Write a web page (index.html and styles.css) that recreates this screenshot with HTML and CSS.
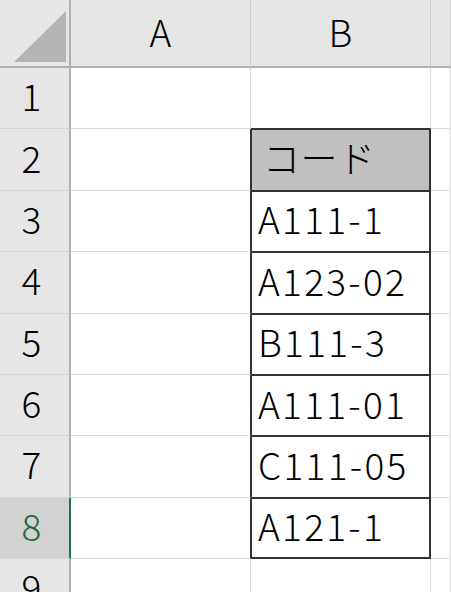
FILE: index.html
```html
<!DOCTYPE html>
<html>

<head>
    <meta charset="utf-8">
    <meta name="viewport" content="width=device-width, initial-scale=1.0">
    <title>Sheet</title>
    <link rel="stylesheet" href="styles.css">
</head>

<body>
    <div class="sheet">
        <!-- 列見出し -->
        <div class="corner">
            <svg width="70" height="67" viewBox="0 0 70 67">
                <polygon points="14,62 66,11 66,62" fill="#b4b4b4" />
            </svg>
        </div>
        <div class="col-head">A</div>
        <div class="col-head">B</div>
        <div class="col-head"></div>

        <div class="row-head">1</div>
        <div class="cell"></div>
        <div class="cell top-of-table"></div>
        <div class="cell"></div>

        <div class="row-head">2</div>
        <div class="cell left-of-table"></div>
        <div class="cell boxed title">コード</div>
        <div class="cell"></div>

        <div class="row-head">3</div>
        <div class="cell left-of-table"></div>
        <div class="cell boxed">A111-1</div>
        <div class="cell"></div>

        <div class="row-head">4</div>
        <div class="cell left-of-table"></div>
        <div class="cell boxed">A123-02</div>
        <div class="cell"></div>

        <div class="row-head">5</div>
        <div class="cell left-of-table"></div>
        <div class="cell boxed">B111-3</div>
        <div class="cell"></div>

        <div class="row-head">6</div>
        <div class="cell left-of-table"></div>
        <div class="cell boxed">A111-01</div>
        <div class="cell"></div>

        <div class="row-head">7</div>
        <div class="cell left-of-table"></div>
        <div class="cell boxed">C111-05</div>
        <div class="cell"></div>

        <div class="row-head selected">8</div>
        <div class="cell left-of-table"></div>
        <div class="cell boxed last">A121-1</div>
        <div class="cell"></div>

        <div class="row-head">9</div>
        <div class="cell"></div>
        <div class="cell"></div>
        <div class="cell"></div>
    </div>
</body>

</html>
```

FILE: styles.css
```css
body {
    margin: 0;
    background: #ffffff;
    color: #000000;
    font-family: "Noto Sans CJK JP", "Noto Sans", sans-serif;
    font-weight: 300;
    overflow: hidden;
}

.sheet {
    display: grid;
    grid-template-columns: 71px 180px 180px 1fr;
    grid-template-rows: 68px repeat(9, 61.375px);
    width: 451px;
}

.sheet > div {
    box-sizing: border-box;
}

/* 見出し */
.corner {
    background: #e6e6e6;
    border-right: 2px solid #b1b1b1;
    border-bottom: 2px solid #b1b1b1;
}

.corner svg {
    display: block;
}

.col-head {
    background: #e6e6e6;
    border-right: 1px solid #cfcfcf;
    border-bottom: 2px solid #b1b1b1;
    display: flex;
    align-items: center;
    justify-content: center;
    font-size: 37px;
    line-height: 1;
    padding-bottom: 4px;
}

.row-head {
    background: #e6e6e6;
    border-right: 2px solid #b1b1b1;
    border-bottom: 1px solid #d4d4d4;
    display: flex;
    align-items: center;
    justify-content: center;
    font-size: 37px;
    line-height: 1;
    padding: 0 6px 5px 0;
}

.row-head.selected {
    background: #d2d2d2;
    color: #1d6b3f;
    border-right-color: #217346;
}

/* セル */
.cell {
    border-right: 1px solid #dadada;
    border-bottom: 1px solid #dadada;
    display: flex;
    align-items: center;
    padding: 0 0 4px 7px;
    font-size: 37px;
    line-height: 1;
    letter-spacing: 2.3px;
    white-space: nowrap;
}

.cell.top-of-table {
    border-bottom-color: #333333;
}

.cell.left-of-table {
    border-right-color: #333333;
}

.cell.boxed {
    border-right-color: #333333;
    border-bottom-color: #333333;
    box-shadow: inset 1px 1px 0 #333333, inset -1px 0 0 #333333;
}

.cell.boxed.last {
    box-shadow: inset 1px 1px 0 #333333, inset -1px -1px 0 #333333;
}

.cell.title {
    background: #c0c0c0;
    padding-left: 12px;
    letter-spacing: 0.5px;
}
```
